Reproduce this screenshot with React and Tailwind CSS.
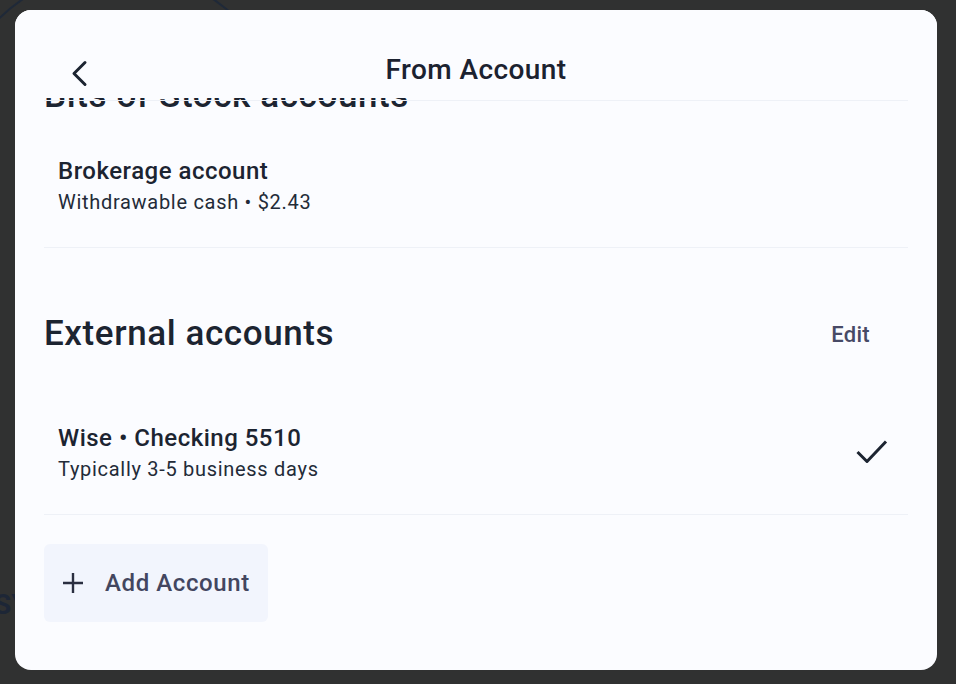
import React from 'react';

const accounts = [
  { id: 'brokerage', name: 'Brokerage account', detail: 'Withdrawable cash • $2.43' },
];

const external = [
  { id: 'wise', name: 'Wise • Checking 5510', detail: 'Typically 3-5 business days', selected: true },
];

function BackIcon() {
  return (
    <svg width="18" height="28" viewBox="0 0 18 28" fill="none">
      <path d="M15 2.5 L4 13.5 L15 24.5" stroke="#1c2431" strokeWidth="3" strokeLinecap="round" strokeLinejoin="round" />
    </svg>
  );
}

function CheckIcon() {
  return (
    <svg width="34" height="26" viewBox="0 0 34 26" fill="none">
      <path d="M2.5 13 L12 22.5 L31 2.5" stroke="#1c2431" strokeWidth="3" strokeLinejoin="round" />
    </svg>
  );
}

function PlusIcon() {
  return (
    <svg width="22" height="22" viewBox="0 0 22 22" fill="none">
      <path d="M11 1 V21 M1 11 H21" stroke="#2a2e40" strokeWidth="2.4" />
    </svg>
  );
}

function AccountRow({ account, first }) {
  return (
    <div
      className={`flex items-center justify-between border-b border-[#eef1f7] px-[14px] pb-[29px] ${
        first ? 'pt-[40px]' : 'pt-[69px]'
      }`}
    >
      <div>
        <div className="text-[24px] leading-[30px] tracking-[0.5px] font-medium text-[#1c2431]">{account.name}</div>
        <div className="text-[20px] leading-[32px] tracking-[0.7px] text-[#232b38]">{account.detail}</div>
      </div>
      {account.selected && (
        <div className="mr-[5px] mb-[4px]">
          <CheckIcon />
        </div>
      )}
    </div>
  );
}

export default function App() {
  return (
    <div className="relative w-[956px] h-[684px] overflow-hidden bg-[#303131] font-[Roboto,sans-serif] pt-[10px] pl-[15px]">
      {/* page behind the sheet */}
      <svg className="absolute left-0 top-0" width="300" height="60" viewBox="0 0 300 60" fill="none">
        <circle cx="118" cy="140" r="170" stroke="#1f2938" strokeWidth="2" />
      </svg>
      <span className="absolute left-[-6px] top-[584px] text-[28px] font-bold text-[#1d2636]">SYMBOL</span>

      <div className="relative flex flex-col w-[922px] h-[660px] rounded-[16px] bg-[#fbfcff] overflow-hidden">
        <div className="relative flex items-center justify-center h-[88px] pt-[31px] bg-[#fbfcff] z-10">
          <button className="absolute left-[55px] top-[50px]">
            <BackIcon />
          </button>
          <h2 className="text-[28px] tracking-[0.4px] font-medium text-[#1b2230]">From Account</h2>
        </div>

        <div className="relative flex-1 overflow-hidden px-[29px]">
          <div className="absolute left-[29px] right-[29px] top-[2px] h-px bg-[#eef1f7]" />

          <h3 className="mt-[-22px] text-[35px] leading-[40px] tracking-[0.6px] font-medium text-[#1c2431]">
            Bits of Stock accounts
          </h3>
          {accounts.map((a, i) => (
            <AccountRow key={a.id} account={a} first={i === 0} />
          ))}

          <div className="mt-[66px] flex items-center justify-between">
            <h3 className="text-[35px] leading-[40px] tracking-[0.6px] font-medium text-[#1c2431]">External accounts</h3>
            <button className="mr-[38px] text-[22px] tracking-[0.3px] font-medium text-[#474a66]">Edit</button>
          </div>
          {external.map((a) => (
            <AccountRow key={a.id} account={a} />
          ))}

          <button className="mt-[29px] flex items-center w-[224px] h-[78px] rounded-[6px] bg-[#f2f5fd] pl-[18px]">
            <PlusIcon />
            <span className="ml-[21px] text-[24px] tracking-[0.6px] font-medium text-[#43465f]">Add Account</span>
          </button>
        </div>
      </div>
    </div>
  );
}
